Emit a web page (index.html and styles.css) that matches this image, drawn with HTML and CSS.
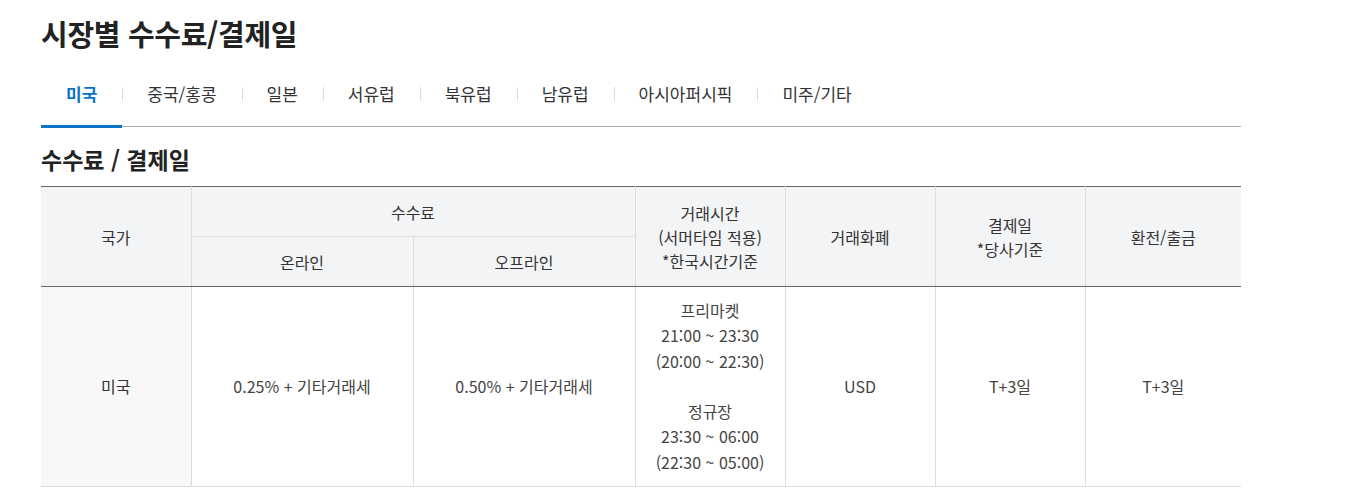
FILE: index.html
```html
<!DOCTYPE html>
<html lang="ko">
<head>
<meta charset="utf-8">
<title>시장별 수수료/결제일</title>
<link rel="stylesheet" href="styles.css">
</head>
<body>
<div class="wrap">
  <h1 class="title">시장별 수수료/결제일</h1>
  <ul class="tabs">
    <li class="tab active">미국</li>
    <li class="tab">중국/홍콩</li>
    <li class="tab">일본</li>
    <li class="tab">서유럽</li>
    <li class="tab">북유럽</li>
    <li class="tab">남유럽</li>
    <li class="tab">아시아퍼시픽</li>
    <li class="tab">미주/기타</li>
  </ul>
  <h2 class="subtitle">수수료 / 결제일</h2>
  <table class="fee-table">
    <colgroup>
      <col class="c150"><col class="c222"><col class="c222"><col class="c150"><col class="c150"><col class="c150"><col class="c156">
    </colgroup>
    <thead>
      <tr class="h1row">
        <th rowspan="2" class="first">국가</th>
        <th colspan="2">수수료</th>
        <th rowspan="2">거래시간<br>(서머타임 적용)<br>*한국시간기준</th>
        <th rowspan="2">거래화폐</th>
        <th rowspan="2">결제일<br>*당사기준</th>
        <th rowspan="2">환전/출금</th>
      </tr>
      <tr class="h2row">
        <th>온라인</th>
        <th>오프라인</th>
      </tr>
    </thead>
    <tbody>
      <tr class="brow">
        <td class="first country">미국</td>
        <td>0.25% + 기타거래세</td>
        <td>0.50% + 기타거래세</td>
        <td class="times">프리마켓<br>21:00 ~ 23:30<br>(20:00 ~ 22:30)<br><br>정규장<br>23:30 ~ 06:00<br>(22:30 ~ 05:00)</td>
        <td>USD</td>
        <td>T+3일</td>
        <td>T+3일</td>
      </tr>
    </tbody>
  </table>
</div>
</body>
</html>
```
FILE: styles.css
```css
* { box-sizing: border-box; }
body {
  margin: 0;
  background: #fff;
  font-family: "Noto Sans CJK KR", "Noto Sans", sans-serif;
  color: #333;
}
.wrap {
  width: 1200px;
  margin-left: 41px;
}
.title {
  margin: 13px 0 0;
  font-size: 29px;
  line-height: 40px;
  font-weight: 700;
  color: #222;
  letter-spacing: -0.3px;
}
.tabs {
  list-style: none;
  margin: 9px 0 0;
  padding: 0;
  display: flex;
  border-bottom: 1px solid #aaa;
  height: 65px;
}
.tab {
  position: relative;
  padding: 0 25px;
  line-height: 64px;
  font-size: 17px;
  color: #333;
}
.tab + .tab::before {
  content: "";
  position: absolute;
  left: 0;
  top: 25px;
  width: 1px;
  height: 14px;
  background: #ddd;
}
.tab.active {
  color: #0b73c9;
  font-weight: 700;
}
.tab.active::after {
  content: "";
  position: absolute;
  left: 0;
  right: 0;
  bottom: -2px;
  height: 3px;
  background: #0b73c9;
}
.subtitle {
  margin: 16px 0 11px;
  font-size: 23px;
  line-height: 32px;
  font-weight: 700;
  color: #222;
}
.fee-table {
  width: 1200px;
  table-layout: fixed;
  border-collapse: collapse;
  border-top: 1px solid #666;
  font-size: 16px;
}
.c150 { width: 150px; }
.c222 { width: 222px; }
.c156 { width: 156px; }
.fee-table th,
.fee-table td {
  padding: 0;
  text-align: center;
  vertical-align: middle;
  border-left: 1px solid #ddd;
}
.fee-table th.first,
.fee-table td.first { border-left: none; }
.fee-table th {
  background: #f3f4f6;
  font-weight: 400;
  color: #333;
  line-height: 24px;
}
.h1row th { height: 50px; border-bottom: 1px solid #ddd; }
.h2row th { height: 50px; border-bottom: 1px solid #666; }
.fee-table th[rowspan] { border-bottom: 1px solid #666; }
.brow td {
  height: 200px;
  color: #444;
  line-height: 25.3px;
  border-bottom: 1px solid #ddd;
}
.brow td.country { background: #f8f8f8; color: #333; }
```
